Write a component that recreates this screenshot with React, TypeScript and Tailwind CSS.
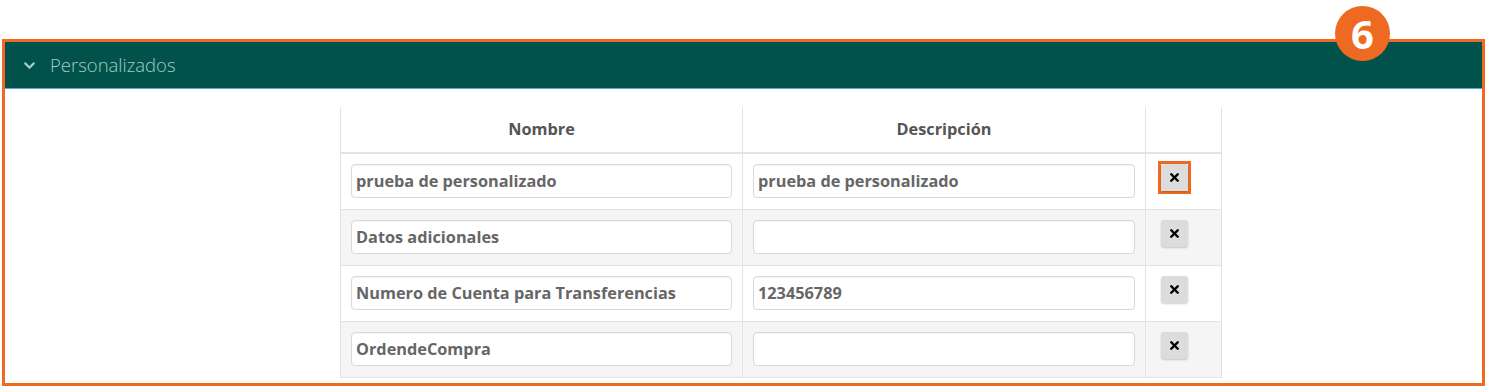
import React from 'react';
import { ChevronDown, X } from 'lucide-react';

interface Row {
  nombre: string;
  descripcion: string;
}

const rows: Row[] = [
  { nombre: 'prueba de personalizado', descripcion: 'prueba de personalizado' },
  { nombre: 'Datos adicionales', descripcion: '' },
  { nombre: 'Numero de Cuenta para Transferencias', descripcion: '123456789' },
  { nombre: 'OrdendeCompra', descripcion: '' },
];

function Field({ value }: { value: string }) {
  return (
    <div className="flex h-[34px] items-center rounded-[4px] border border-[#d9d9d9] bg-white px-[4px] text-[16.3px] font-bold text-[#666] shadow-[inset_0_1px_1px_rgba(0,0,0,0.05)]">
      {value}
    </div>
  );
}

function DeleteButton({ highlight }: { highlight: boolean }) {
  const btn = (
    <div className="flex h-[27px] w-[27px] items-center justify-center rounded-[3px] bg-[#dcdcdc] shadow-[0_1px_2px_rgba(0,0,0,0.2)]">
      <X className="h-[13px] w-[13px] text-black" strokeWidth={4.5} />
    </div>
  );
  if (!highlight) return <div className="pl-[15px] pt-[10px]">{btn}</div>;
  return (
    <div className="pl-[12px] pt-[7px]">
      <div className="w-fit border-[3px] border-[#ee6a23]">{btn}</div>
    </div>
  );
}

export default function App() {
  return (
    <div className="relative h-[390px] w-[1489px] overflow-hidden bg-white pt-[39px] pl-[2px] font-['Open_Sans',sans-serif]">
      <div className="h-[347px] w-[1483px] border-[3px] border-[#ee6a23] bg-white">
        <div className="flex h-[47px] items-center gap-[12px] border-b border-[#5aa6d6] bg-[#02524c] pl-[16px] text-[18.5px] text-[#9fcfc3]">
          <ChevronDown className="h-[17px] w-[17px]" strokeWidth={3} />
          <span className="font-light">Personalizados</span>
        </div>
        <div className="pt-[18px] pl-[335px]">
          <table className="w-[881px] table-fixed border-collapse text-[16.3px] text-[#555]">
            <colgroup>
              <col className="w-[402px]" />
              <col className="w-[403px]" />
              <col className="w-[76px]" />
            </colgroup>
            <thead>
              <tr className="h-[46px]">
                <th className="border-x border-b-2 border-[#e3e3e3] font-bold">Nombre</th>
                <th className="border-x border-b-2 border-[#e3e3e3] font-bold">Descripción</th>
                <th className="border-x border-b-2 border-[#e3e3e3]"></th>
              </tr>
            </thead>
            <tbody>
              {rows.map((row, i) => (
                <tr key={i} className={i % 2 === 1 ? 'h-[56px] bg-[#f5f5f5]' : 'h-[56px] bg-white'}>
                  <td className="border border-[#e3e3e3] px-[10px] align-middle">
                    <Field value={row.nombre} />
                  </td>
                  <td className="border border-[#e3e3e3] px-[10px] align-middle">
                    <Field value={row.descripcion} />
                  </td>
                  <td className="border border-[#e3e3e3] p-0 align-top">
                    <DeleteButton highlight={i === 0} />
                  </td>
                </tr>
              ))}
            </tbody>
          </table>
        </div>
      </div>
      <div className="absolute top-[6px] left-[1335px] flex h-[55px] w-[55px] items-center justify-center rounded-full bg-[#ee6a23] text-[40px] font-bold text-white">
        6
      </div>
    </div>
  );
}
